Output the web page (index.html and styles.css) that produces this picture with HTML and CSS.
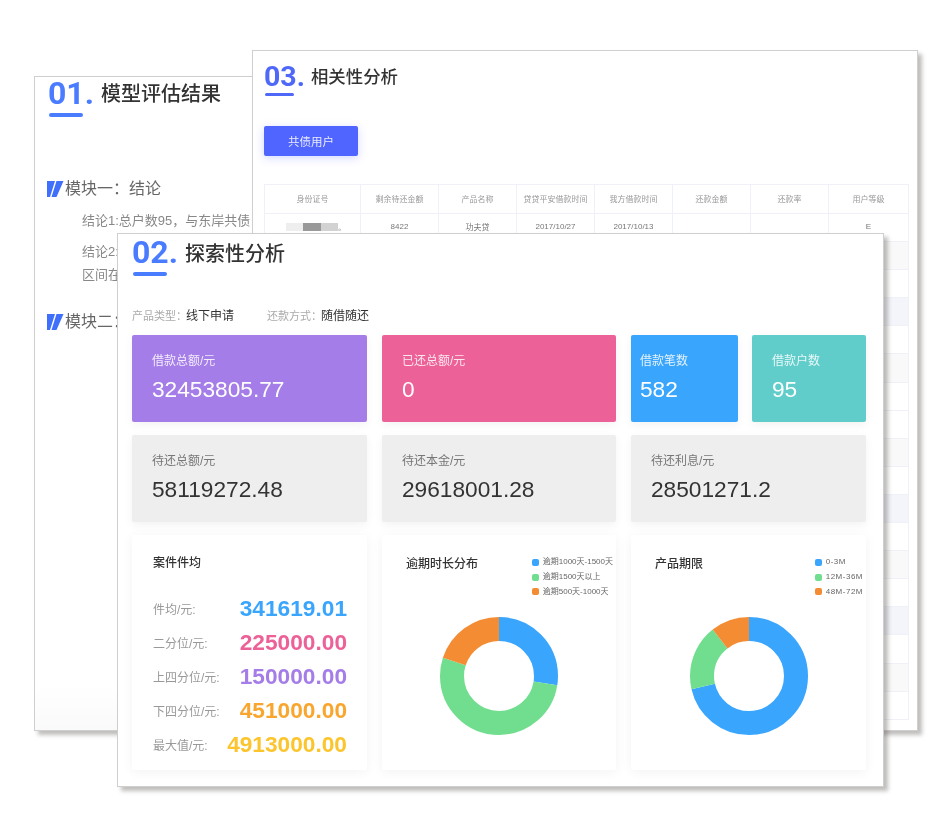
FILE: index.html
```html
<!DOCTYPE html>
<html lang="zh-CN">
<head>
  <meta charset="UTF-8">
  <meta name="viewport" content="width=device-width, initial-scale=1.0">
  <title>分析报告</title>
  <link rel="stylesheet" href="styles.css">
</head>
<body>
  <div class="stage">

    <!-- 01 模型评估结果 -->
    <section class="sheet sheet-one">
      <div class="sec-head">
        <div class="sec-mark">
          <span class="sec-num">01.</span>
          <span class="sec-line"></span>
        </div>
        <h2 class="sec-title">模型评估结果</h2>
      </div>

      <h3 class="module module-first">
        <svg class="module-icon" viewBox="0 0 17 16"><path d="M0 0H8L3 16H0zM9.500 0H16.500L9.500 16H4.500z"/></svg>
        模块一：结论
      </h3>
      <p class="conclusion">结论1:总户数95，与东岸共债</p>
      <p class="conclusion">结论2:<br>区间在</p>

      <h3 class="module module-second">
        <svg class="module-icon" viewBox="0 0 17 16"><path d="M0 0H8L3 16H0zM9.500 0H16.500L9.500 16H4.500z"/></svg>
        模块二：
      </h3>
    </section>

    <!-- 03 相关性分析 -->
    <section class="sheet sheet-three">
      <div class="sec-head">
        <div class="sec-mark">
          <span class="sec-num">03.</span>
          <span class="sec-line"></span>
        </div>
        <h2 class="sec-title">相关性分析</h2>
      </div>

      <button class="debt-btn" type="button">共债用户</button>

      <table class="debt-table">
        <thead>
          <tr>
            <th>身份证号</th><th>剩余待还金额</th><th>产品名称</th><th>贷贷平安借款时间</th>
            <th>我方借款时间</th><th>还款金额</th><th>还款率</th><th>用户等级</th>
          </tr>
        </thead>
        <tbody>
          <tr>
            <td><span class="masked"><i class="m1"></i><i class="m2"></i><i class="m3"></i><b>。</b></span></td>
            <td>8422</td><td>功夫贷</td><td>2017/10/27</td><td>2017/10/13</td><td></td><td></td><td>E</td>
          </tr>
          <tr class="row-grey"><td></td><td></td><td></td><td></td><td></td><td></td><td></td><td></td></tr>
          <tr><td></td><td></td><td></td><td></td><td></td><td></td><td></td><td></td></tr>
          <tr class="row-blue"><td></td><td></td><td></td><td></td><td></td><td></td><td></td><td></td></tr>
          <tr><td></td><td></td><td></td><td></td><td></td><td></td><td></td><td></td></tr>
          <tr class="row-grey"><td></td><td></td><td></td><td></td><td></td><td></td><td></td><td></td></tr>
          <tr><td></td><td></td><td></td><td></td><td></td><td></td><td></td><td></td></tr>
          <tr><td></td><td></td><td></td><td></td><td></td><td></td><td></td><td></td></tr>
          <tr class="row-grey"><td></td><td></td><td></td><td></td><td></td><td></td><td></td><td></td></tr>
          <tr><td></td><td></td><td></td><td></td><td></td><td></td><td></td><td></td></tr>
          <tr class="row-blue"><td></td><td></td><td></td><td></td><td></td><td></td><td></td><td></td></tr>
          <tr><td></td><td></td><td></td><td></td><td></td><td></td><td></td><td></td></tr>
          <tr class="row-grey"><td></td><td></td><td></td><td></td><td></td><td></td><td></td><td></td></tr>
          <tr><td></td><td></td><td></td><td></td><td></td><td></td><td></td><td></td></tr>
          <tr class="row-blue"><td></td><td></td><td></td><td></td><td></td><td></td><td></td><td></td></tr>
          <tr><td></td><td></td><td></td><td></td><td></td><td></td><td></td><td></td></tr>
          <tr class="row-grey"><td></td><td></td><td></td><td></td><td></td><td></td><td></td><td></td></tr>
          <tr><td></td><td></td><td></td><td></td><td></td><td></td><td></td><td></td></tr>
        </tbody>
      </table>
    </section>

    <!-- 02 探索性分析 -->
    <section class="sheet sheet-two">
      <div class="sec-head">
        <div class="sec-mark">
          <span class="sec-num">02.</span>
          <span class="sec-line"></span>
        </div>
        <h2 class="sec-title">探索性分析</h2>
      </div>

      <div class="meta">
        <span class="meta-item"><span class="meta-key">产品类型：</span>线下申请</span>
        <span class="meta-item"><span class="meta-key">还款方式：</span>随借随还</span>
      </div>

      <div class="board">
        <div class="stat stat-purple">
          <span class="stat-label">借款总额/元</span>
          <span class="stat-value">32453805.77</span>
        </div>
        <div class="stat stat-pink">
          <span class="stat-label">已还总额/元</span>
          <span class="stat-value">0</span>
        </div>
        <div class="stat-pair">
          <div class="stat stat-blue stat-narrow">
            <span class="stat-label">借款笔数</span>
            <span class="stat-value">582</span>
          </div>
          <div class="stat stat-teal">
            <span class="stat-label">借款户数</span>
            <span class="stat-value">95</span>
          </div>
        </div>

        <div class="stat stat-grey">
          <span class="stat-label">待还总额/元</span>
          <span class="stat-value">58119272.48</span>
        </div>
        <div class="stat stat-grey">
          <span class="stat-label">待还本金/元</span>
          <span class="stat-value">29618001.28</span>
        </div>
        <div class="stat stat-grey">
          <span class="stat-label">待还利息/元</span>
          <span class="stat-value">28501271.2</span>
        </div>

        <div class="panel panel-case">
          <h4 class="panel-title">案件件均</h4>
          <ul class="case-list">
            <li><span>件均/元:</span><strong class="c-blue">341619.01</strong></li>
            <li><span>二分位/元:</span><strong class="c-pink">225000.00</strong></li>
            <li><span>上四分位/元:</span><strong class="c-purple">150000.00</strong></li>
            <li><span>下四分位/元:</span><strong class="c-orange">451000.00</strong></li>
            <li><span>最大值/元:</span><strong class="c-yellow">4913000.00</strong></li>
          </ul>
        </div>

        <div class="panel panel-chart">
          <div class="chart-head">
            <h4 class="panel-title">逾期时长分布</h4>
            <ul class="legend">
              <li><i class="dot-blue"></i>逾期1000天-1500天</li>
              <li><i class="dot-green"></i>逾期1500天以上</li>
              <li><i class="dot-orange"></i>逾期500天-1000天</li>
            </ul>
          </div>
          <svg class="donut" viewBox="0 0 120 120">
            <g class="donut-ring">
              <circle class="arc-blue" cx="60" cy="60" r="47" pathLength="360" stroke-dasharray="99 261"/>
              <circle class="arc-green" cx="60" cy="60" r="47" pathLength="360" stroke-dasharray="189 171" stroke-dashoffset="-99"/>
              <circle class="arc-orange" cx="60" cy="60" r="47" pathLength="360" stroke-dasharray="72 288" stroke-dashoffset="-288"/>
            </g>
          </svg>
        </div>

        <div class="panel panel-chart panel-term">
          <div class="chart-head">
            <h4 class="panel-title">产品期限</h4>
            <ul class="legend">
              <li><i class="dot-blue"></i>0-3M</li>
              <li><i class="dot-green"></i>12M-36M</li>
              <li><i class="dot-orange"></i>48M-72M</li>
            </ul>
          </div>
          <svg class="donut" viewBox="0 0 120 120">
            <g class="donut-ring">
              <circle class="arc-blue" cx="60" cy="60" r="47" pathLength="360" stroke-dasharray="257 103"/>
              <circle class="arc-green" cx="60" cy="60" r="47" pathLength="360" stroke-dasharray="65 295" stroke-dashoffset="-257"/>
              <circle class="arc-orange" cx="60" cy="60" r="47" pathLength="360" stroke-dasharray="38 322" stroke-dashoffset="-322"/>
            </g>
          </svg>
        </div>
      </div>
    </section>

  </div>
</body>
</html>
```

FILE: styles.css
```css
/* RESET */
* {
  margin: 0;
  padding: 0;
  box-sizing: border-box;
}

body {
  background-color: #fff;
  font-family: "Liberation Sans", "Noto Sans CJK SC", sans-serif;
  color: #333;
}

ul {
  list-style: none;
}

/* CANVAS WITH THE THREE OVERLAPPING SHEETS */
.stage {
  position: relative;
  width: 945px;
  height: 831px;
  overflow: hidden;
}

.sheet {
  position: absolute;
  background-color: #fff;
  border: 1px solid #cfcfcf;
  box-shadow: 4px 4px 4px rgba(90, 85, 82, 0.38);
}

.sheet-one {
  left: 34px;
  top: 76px;
  width: 400px;
  height: 655px;
  padding-left: 12px;
  background-image: linear-gradient(to bottom, #fff 93%, #fafafa 100%);
  filter: blur(0.4px);
}

.sheet-three {
  left: 252px;
  top: 50px;
  width: 666px;
  height: 681px;
  padding: 11px 9px 0 11px;
  filter: blur(0.5px);
}

.sheet-two {
  left: 117px;
  top: 233px;
  width: 767px;
  height: 554px;
  padding: 2px 17px 0 14px;
  filter: blur(0.2px);
}

/* SECTION HEADING */
.sec-head {
  display: flex;
  align-items: flex-start;
  gap: 7px;
}

.sec-mark {
  display: flex;
  flex-direction: column;
}

.sec-num {
  font-family: Roboto, sans-serif;
  font-size: 32px;
  line-height: 32px;
  font-weight: 700;
  color: #4a7cff;
}

.sec-line {
  width: 34px;
  height: 4px;
  margin: 4px 0 0 1px;
  border-radius: 2px;
  background-color: #4a7cff;
}

.sec-title {
  margin-top: 1px;
  font-size: 20px;
  line-height: 32px;
  font-weight: 500;
  color: #333;
}

.sheet-one .sec-mark {
  margin-left: 1px;
}

.sheet-two .sec-title {
  margin-top: 2px;
}

.sheet-three .sec-head {
  gap: 6px;
}

.sheet-three .sec-num {
  font-size: 28.5px;
  line-height: 29px;
  color: #4f68f8;
}

.sheet-three .sec-line {
  width: 29px;
  height: 3px;
  margin-top: 2px;
  background-color: #4f68f8;
}

.sheet-three .sec-title {
  font-size: 17.4px;
  line-height: 29px;
}

/* MODULES ON SHEET ONE */
.module {
  display: flex;
  align-items: center;
  gap: 1px;
  font-size: 16px;
  line-height: 24px;
  font-weight: 400;
  color: #666;
}

.module-icon {
  width: 17px;
  height: 16px;
  fill: #3f6ffb;
}

.module-first {
  margin-top: 60px;
}

.module-second {
  margin-top: 24px;
}

.conclusion {
  margin: 8px 0 0 35px;
  font-size: 13px;
  line-height: 23px;
  color: #888;
  white-space: nowrap;
}

/* SHEET THREE: BUTTON AND TABLE */
.debt-btn {
  display: block;
  width: 94px;
  height: 29.5px;
  margin-top: 30px;
  border: none;
  border-radius: 2px;
  background-color: #5064ff;
  color: #e8ebff;
  font-family: inherit;
  font-size: 11.5px;
  box-shadow: 0 2px 8px rgba(80, 100, 255, 0.25);
}

.debt-table {
  width: 644px;
  margin-top: 28.5px;
  table-layout: fixed;
  border-collapse: collapse;
  font-size: 8px;
  color: #777;
  text-align: center;
}

.debt-table th,
.debt-table td {
  height: 28.1px;
  padding-bottom: 2px;
  border: 1px solid #eff0f8;
  font-weight: 400;
}

.debt-table th {
  height: 29px;
  color: #999;
}

.debt-table th:nth-child(1) {
  width: 96px;
}

.debt-table th:nth-child(n+2) {
  width: 78px;
}

.debt-table th:nth-child(8) {
  width: 80px;
}

.row-grey td {
  background-color: #f9f9f9;
}

.row-blue td {
  background-color: #f4f5fb;
}

/* blurred id number in the first row */
.masked {
  display: inline-flex;
  align-items: flex-end;
  height: 8px;
  margin-left: 6px;
  vertical-align: middle;
}

.masked i {
  display: block;
  width: 17.500px;
  height: 8px;
}

.masked .m1 { background-color: #eee; }
.masked .m2 { background-color: #999; }
.masked .m3 { background-color: #d2d2d2; }

.masked b {
  font-weight: 400;
  font-size: 7px;
  line-height: 7px;
}

/* SHEET TWO: META LINE */
.meta {
  display: flex;
  gap: 33px;
  margin-top: 28px;
  height: 20px;
  align-items: center;
  font-size: 12px;
  color: #333;
}

.meta-key {
  margin-right: -1px;
  font-size: 11px;
  color: #aaa;
}

/* SHEET TWO: BOARD */
.board {
  display: grid;
  grid-template-columns: 235px 234px 235px;
  grid-template-rows: 87px 87px 235px;
  column-gap: 15px;
  row-gap: 13px;
  margin-top: 11px;
}

.stat {
  display: flex;
  flex-direction: column;
  padding: 17px 20px 0;
  border-radius: 2px;
  box-shadow: 0 3px 10px rgba(0, 0, 0, 0.05);
  color: #fff;
}

.stat-label {
  font-size: 12px;
  line-height: 18px;
  opacity: 0.85;
}

.stat-value {
  margin-top: 3.5px;
  font-size: 22.7px;
  line-height: 30px;
}

.stat-purple { background-color: #a57de8; }
.stat-pink { background-color: #ec6198; }
.stat-blue { background-color: #3aa5fd; }
.stat-teal { background-color: #61cdcb; }

.stat-grey {
  background-color: #eee;
  color: #333;
}

.stat-grey .stat-label {
  color: #777;
  opacity: 1;
}

.stat-pair {
  display: grid;
  grid-template-columns: 107px 114px;
  column-gap: 14px;
}

.stat-narrow {
  padding-left: 9px;
}

.panel {
  padding: 19px 20px 0 21px;
  border-radius: 2px;
  background-color: #fff;
  box-shadow: 0 2px 12px rgba(0, 0, 0, 0.05);
}

.panel-title {
  font-size: 12px;
  line-height: 18px;
  font-weight: 500;
  color: #333;
}

/* CASE AVERAGES */
.case-list {
  margin-top: 19px;
}

.case-list li {
  display: flex;
  justify-content: space-between;
  align-items: center;
  height: 34px;
  font-size: 12px;
  color: #999;
}

.case-list strong {
  font-size: 22.7px;
}

.c-blue { color: #3aa5fd; }
.c-pink { color: #ec6198; }
.c-purple { color: #a57de8; }
.c-orange { color: #f9a62f; }
.c-yellow { color: #fcc52e; }

/* DONUT CHARTS */
.panel-chart {
  display: flex;
  flex-direction: column;
  align-items: center;
  padding: 19px 3px 0 24px;
}

.chart-head {
  display: flex;
  justify-content: space-between;
  align-items: flex-start;
  width: 100%;
  height: 62px;
}

.chart-head .panel-title {
  margin-top: 1px;
}

.legend {
  margin-top: 1px;
  font-size: 8px;
  line-height: 14.8px;
  color: #666;
  white-space: nowrap;
}

.legend li {
  display: flex;
  align-items: center;
  gap: 3.5px;
}

.legend i {
  width: 7px;
  height: 7px;
  border-radius: 2px;
}

.panel-term .legend {
  letter-spacing: 0.5px;
}

.dot-blue { background-color: #3aa5fd; }
.dot-green { background-color: #70de8e; }
.dot-orange { background-color: #f38c33; }

.donut {
  display: block;
  width: 120px;
  height: 120px;
  margin-left: -21px;
}

.donut-ring {
  transform: rotate(-90deg);
  transform-origin: 60px 60px;
}

.donut circle {
  fill: none;
  stroke-width: 24px;
}

.arc-blue { stroke: #3aa5fd; }
.arc-green { stroke: #70de8e; }
.arc-orange { stroke: #f38c33; }
```
